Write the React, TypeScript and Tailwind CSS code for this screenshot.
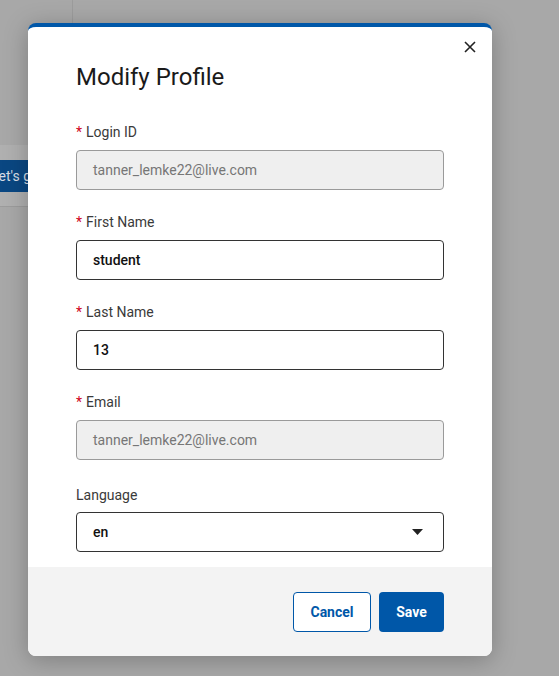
import React from 'react';

type Field = {
  label: string;
  value: string;
  required?: boolean;
  disabled?: boolean;
};

const fields: Field[] = [
  { label: 'Login ID', value: 'tanner_lemke22@live.com', required: true, disabled: true },
  { label: 'First Name', value: 'student', required: true },
  { label: 'Last Name', value: '13', required: true },
  { label: 'Email', value: 'tanner_lemke22@live.com', required: true, disabled: true },
];

const FieldRow: React.FC<{ field: Field }> = ({ field }) => {
  return (
    <div className="flex flex-col gap-2">
      <label className="flex h-5 items-center text-sm text-[#3a3a3a]">
        {field.required && <span className="mr-1 text-[#d0021b]">*</span>}
        {field.label}
      </label>
      <div
        className={`flex h-10 items-center rounded border px-4 text-sm ${
          field.disabled
            ? 'border-[#9a9a9a] bg-[#efefef] text-[#767676]'
            : 'border-[#333333] bg-white font-medium text-[#111111]'
        }`}
      >
        {field.value}
      </div>
    </div>
  );
};

export default function App() {
  return (
    <div
      className="relative h-[676px] w-[559px] overflow-hidden bg-[#a8a8a8]"
      style={{ fontFamily: 'Roboto, "Liberation Sans", sans-serif' }}
    >
      {/* page under the overlay */}
      <div className="flex flex-col">
        <div className="h-[145px] w-[73px] border-r border-[#9c9c9c]" />
        <div className="flex h-[62px] w-[80px] items-center border-b border-[#9c9c9c] bg-[#b0b0b0]">
          <div className="flex h-8 w-full items-center overflow-hidden bg-[#0a4782] text-sm whitespace-nowrap text-[#d7dde5]">
            <span className="-ml-[9px]">Let's get started</span>
          </div>
        </div>
      </div>

      {/* modal */}
      <div className="absolute top-[23px] left-[28px] flex h-[633px] w-[464px] flex-col overflow-hidden rounded-lg border-t-4 border-[#0057a8] bg-white shadow-[0_4px_24px_rgba(0,0,0,0.25)]">
        <button className="absolute top-[10px] right-[12px] flex h-5 w-5 items-center justify-center text-[#222]">
          <svg width="12" height="12" viewBox="0 0 12 12" fill="none" stroke="currentColor" strokeWidth="1.6">
            <path d="M1 1 L11 11 M11 1 L1 11" />
          </svg>
        </button>
        <div className="flex flex-1 flex-col overflow-hidden px-12 pt-[34px]">
          <h2 className="h-8 text-2xl leading-8 text-[#1a1a1a]">Modify Profile</h2>
          <div className="mt-[29px] flex flex-col gap-[22px]">
            {fields.map((f) => (
              <FieldRow key={f.label} field={f} />
            ))}
            <div className="mt-[3px] flex flex-col gap-[7px]">
              <label className="flex h-5 items-center text-sm text-[#3a3a3a]">Language</label>
              <div className="flex h-10 items-center justify-between rounded border border-[#333333] pr-5 pl-4 text-sm font-medium text-[#111111]">
                en
                <svg width="11" height="6" viewBox="0 0 11 6">
                  <path d="M0 0 L11 0 L5.5 6 Z" fill="#222" />
                </svg>
              </div>
            </div>
          </div>
        </div>
        <div className="flex h-[89px] shrink-0 items-start justify-end gap-2 bg-[#f3f3f3] px-12 pt-[25px]">
          <button className="h-10 w-[78px] rounded border border-[#0057a8] bg-white text-sm font-bold text-[#0057a8]">
            Cancel
          </button>
          <button className="h-10 w-[65px] rounded bg-[#0057a8] text-sm font-bold text-white">
            Save
          </button>
        </div>
      </div>
    </div>
  );
}
